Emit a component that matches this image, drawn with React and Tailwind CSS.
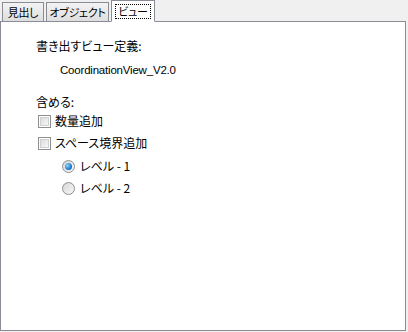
import React from 'react';

const font = "font-['Noto_Sans_CJK_JP','Noto_Sans',sans-serif] [font-feature-settings:'palt']";

const Tab = ({ label, active, width }) =>
  active ? (
    <div
      className={`relative z-10 -mb-px h-[22px] ${width} bg-white border border-[#898c95] border-b-white flex items-center justify-center whitespace-nowrap`}
    >
      <span className="px-[2px] leading-[13px] border border-dotted border-black">{label}</span>
    </div>
  ) : (
    <div
      className={`h-[19px] ${width} bg-gradient-to-b from-[#f3f3f3] to-[#dedede] border border-[#898c95] border-b-0 flex items-center justify-center whitespace-nowrap`}
    >
      {label}
    </div>
  );

const Checkbox = ({ label }) => (
  <label className="flex items-center gap-[4px] h-[16px]">
    <span className="w-[13px] h-[13px] border border-[#8e8f8f] bg-white p-[1px]">
      <span className="block w-full h-full bg-gradient-to-br from-[#dcdcdc] to-[#f8f8f8] border border-[#d0d0d0]" />
    </span>
    <span>{label}</span>
  </label>
);

const Radio = ({ label, checked }) => (
  <label className="flex items-center gap-[5px] h-[16px]">
    <span className="w-[13px] h-[13px] rounded-full border border-[#8e8f8f] bg-gradient-to-br from-[#d6d6d6] to-[#f8f8f8] flex items-center justify-center">
      {checked && (
        <span className="w-[7px] h-[7px] rounded-full bg-[radial-gradient(circle_at_35%_35%,#8fd3ff,#0d6fc4_70%,#0a4e94)]" />
      )}
    </span>
    <span>{label}</span>
  </label>
);

export default function App() {
  return (
    <div className={`w-[408px] h-[332px] bg-[#f0f0f0] text-[12px] text-black ${font}`}>
      <div className="flex items-end h-[21px] pl-[2px] gap-[2px] text-[11px] tracking-[-0.3px]">
        <Tab label="見出し" width="w-[42px]" />
        <Tab label="オブジェクト" width="w-[63px]" />
        <Tab label="ビュー" width="w-[44px]" active />
      </div>
      <div className="w-[406px] h-[310px] bg-white border border-[#898c95] pl-[35px] pt-[16px]">
        <div className="leading-[16px]">書き出すビュー定義:</div>
        <div className="pl-[24px] mt-[9px] leading-[14px] font-['Liberation_Sans',sans-serif] text-[11.5px] tracking-[-0.2px]">CoordinationView_V2.0</div>
        <div className="mt-[17px] leading-[16px]">含める:</div>
        <div className="mt-[3px] flex flex-col gap-[6px] pl-[2px]">
          <Checkbox label="数量追加" />
          <Checkbox label="スペース境界追加" />
          <div className="flex flex-col gap-[6px] pl-[24px] pt-[1px]">
            <Radio label="レベル - 1" checked />
            <Radio label="レベル - 2" />
          </div>
        </div>
      </div>
    </div>
  );
}
